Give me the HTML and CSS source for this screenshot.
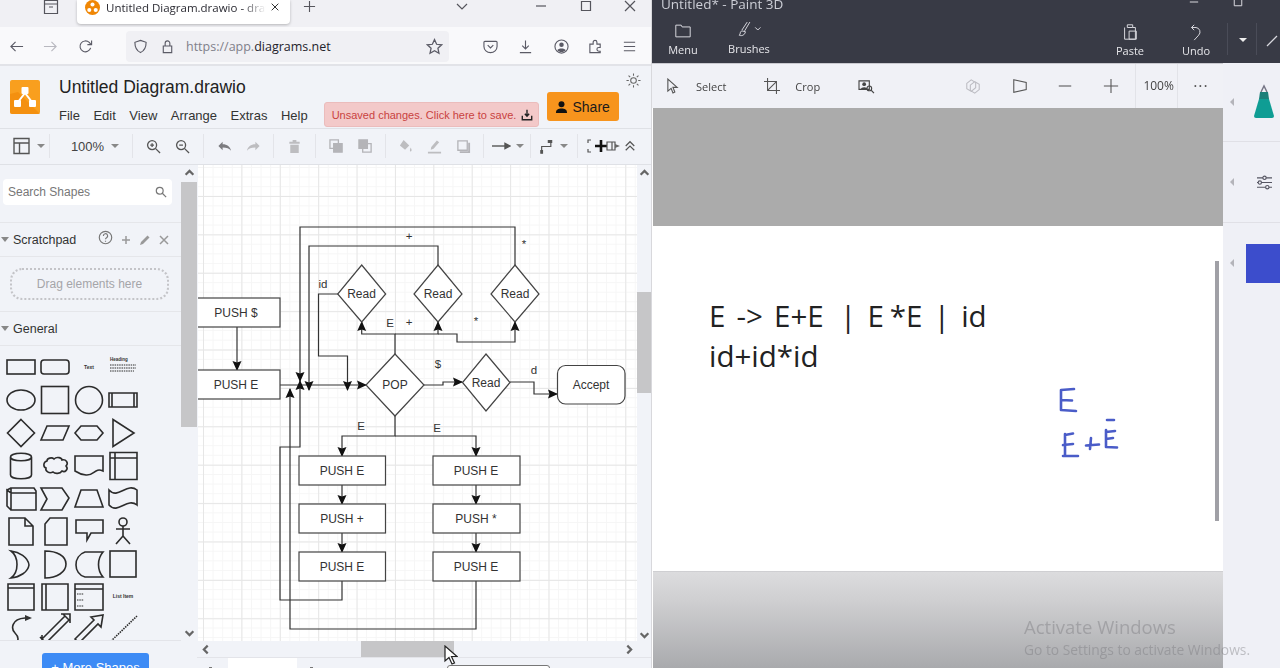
FILE: index.html
```html
<!DOCTYPE html>
<html lang="en">
<head>
<meta charset="utf-8">
<title>draw.io and Paint 3D</title>
<link rel="stylesheet" href="styles.css">
</head>
<body>
<div class="screen">
  <section class="browser">
    <div class="tabstrip">
      <svg class="ti archive" viewBox="0 0 18 18"><path d="M2.500 2.500h13v13h-13zM2.500 6h13M7 9h4"/></svg>
      <div class="tab">
        <svg class="favicon" viewBox="0 0 14 14"><circle cx="7" cy="7" r="7" fill="#f08705"/><circle cx="7" cy="4.200" r="1.900" fill="#fff"/><circle cx="4" cy="9.400" r="1.900" fill="#fff"/><circle cx="10" cy="9.400" r="1.900" fill="#fff"/></svg>
        <span class="tabtitle">Untitled Diagram.drawio - draw.io</span>
        <svg class="ti tabx" viewBox="0 0 12 12"><path d="M2 2l8 8M10 2l-8 8"/></svg>
      </div>
      <svg class="ti plus" viewBox="0 0 14 14"><path d="M7 1v12M1 7h12"/></svg>
      <svg class="ti chev" viewBox="0 0 14 14"><path d="M2 4l5 5 5-5"/></svg>
      <svg class="ti wmin" viewBox="0 0 12 12"><path d="M1 6h10"/></svg>
      <svg class="ti wmax" viewBox="0 0 12 12"><path d="M1.500 1.500h9v9h-9z"/></svg>
      <svg class="ti wclose" viewBox="0 0 12 12"><path d="M1 1l10 10M11 1l-10 10"/></svg>
    </div>
    <div class="navbar">
      <svg class="ni back" viewBox="0 0 16 16"><path d="M15 8H2M7 3L2 8l5 5"/></svg>
      <svg class="ni fwd" viewBox="0 0 16 16"><path d="M1 8h13M9 3l5 5-5 5"/></svg>
      <svg class="ni reload" viewBox="0 0 16 16"><path d="M13.500 9.500A5.800 5.800 0 1 1 12 3.700L14 6M14.500 1.500V6H10"/></svg>
      <div class="urlbar">
        <svg class="ni shield" viewBox="0 0 16 16"><path d="M8 1.500l6 2c0 6-1.500 9-6 11-4.500-2-6-5-6-11z"/></svg>
        <svg class="ni lock" viewBox="0 0 16 16"><path d="M3.500 7.500h9v7h-9zM5.500 7.500V4.500a2.500 2.500 0 0 1 5 0v3"/></svg>
        <span class="url">https://app.<b>diagrams.net</b></span>
        <svg class="ni star" viewBox="0 0 16 16"><path d="M8 1.500l2 4.400 4.700.5-3.500 3.200 1 4.700L8 11.900l-4.200 2.400 1-4.700L1.300 6.400 6 5.900z"/></svg>
      </div>
      <svg class="ni pocket" viewBox="0 0 16 16"><path d="M2 2.500h12a1 1 0 0 1 1 1V8a7 6.500 0 0 1-14 0V3.500a1 1 0 0 1 1-1zM5 6.500l3 3 3-3"/></svg>
      <svg class="ni dl" viewBox="0 0 16 16"><path d="M8 1.500v9M4.500 7L8 10.500 11.500 7M2 14.500h12"/></svg>
      <svg class="ni acct" viewBox="0 0 16 16"><circle cx="8" cy="8" r="7"/><circle class="solid" cx="8" cy="6" r="2.400"/><path class="solid" d="M3.500 12c1-2.500 8-2.500 9 0-2 2.500-7 2.500-9 0z"/></svg>
      <svg class="ni ext" viewBox="0 0 16 16"><path d="M2 6h3.500V4a2 2 0 0 1 4 0v2H13v3.500h-1.500a2 2 0 0 0 0 4H13V15H2z" transform="translate(0 -.5)"/></svg>
      <svg class="ni menu" viewBox="0 0 16 16"><path d="M2 3.500h12M2 8h12M2 12.500h12"/></svg>
    </div>

    <header class="dheader">
      <svg class="dlogo" viewBox="0 0 30 34"><rect width="30" height="34" rx="2" fill="#f99f1e"/><path d="M0 32V14l8-2 22 22H2a2 2 0 0 1-2-2z" fill="#f08705" opacity=".6"/><path d="M15 13L8 22M15 13l7 9" stroke="#fff" stroke-width="2" fill="none"/><rect x="11.500" y="7" width="7" height="7" rx="1" fill="#fff"/><rect x="4" y="20" width="7" height="7" rx="1" fill="#fff"/><rect x="19" y="20" width="7" height="7" rx="1" fill="#fff"/></svg>
      <div class="dhead-main">
        <div class="dtitle">Untitled Diagram.drawio</div>
        <div class="drow">
          <nav class="dmenu"><span>File</span><span>Edit</span><span>View</span><span>Arrange</span><span>Extras</span><span>Help</span></nav>
          <div class="unsaved">Unsaved changes. Click here to save.
            <svg class="savei" viewBox="0 0 14 14"><path d="M7 1v7M4.500 5.500L7 8.500l2.500-3M1.500 8v4.500h11V8"/></svg>
          </div>
          <div class="share"><svg class="sharei" viewBox="0 0 14 14"><circle cx="7" cy="4" r="3.200"/><path d="M1 13.500c0-4 2.500-5 6-5s6 1 6 5z"/></svg>Share</div>
        </div>
      </div>
      <svg class="sun" viewBox="0 0 16 16"><circle cx="8" cy="8" r="3"/><path d="M8 .5v2.500M8 13v2.500M.5 8H3M13 8h2.500M2.700 2.700l1.800 1.800M11.500 11.500l1.800 1.800M2.700 13.300l1.800-1.800M11.500 4.500l1.800-1.800"/></svg>
    </header>

    <div class="dtools">
      <div class="tg"><svg class="tbi dark" viewBox="0 0 18 18"><path d="M1.500 1.500h15v15h-15zM1.500 6h15M7 6v10.500"/></svg><i class="caret"></i></div>
      <div class="tg"><span class="zoomval">100%</span><i class="caret"></i></div>
      <div class="tg"><svg class="tbi dark" viewBox="0 0 16 16"><circle cx="6.500" cy="6.500" r="4.800"/><path d="M10 10l5 5M4.500 6.500h4M6.500 4.500v4"/></svg><svg class="tbi dark" viewBox="0 0 16 16"><circle cx="6.500" cy="6.500" r="4.800"/><path d="M10 10l5 5M4.500 6.500h4"/></svg></div>
      <div class="tg"><svg class="tbi fillsolid" viewBox="0 0 16 16"><path d="M1.500 7.500L6 3v2.500c5 0 8 2.500 9 7-2-2.500-4.500-3.500-9-3.500V12z"/></svg><svg class="tbi fillsolid faint" viewBox="0 0 16 16"><path d="M14.500 7.500L10 3v2.500c-5 0-8 2.500-9 7 2-2.500 4.500-3.500 9-3.500V12z"/></svg></div>
      <div class="tg"><svg class="tbi fillsolid faint" viewBox="0 0 16 16"><path d="M2.500 3h11v2h-11zM6 1h4v2H6zM3.500 6h9v9h-9z"/></svg></div>
      <div class="tg"><svg class="tbi faint" viewBox="0 0 16 16"><path d="M1 1h9v9H1z"/><path class="solid" d="M5 5h9v9H5z"/></svg><svg class="tbi faint" viewBox="0 0 16 16"><path class="solid" d="M1 1h9v9H1z"/><path d="M5 5h9v9H5z"/></svg></div>
      <div class="tg"><svg class="tbi fillsolid faint" viewBox="0 0 16 16"><path d="M6 1l6 6-4.500 4.500L2 7zM13.500 9c1 2 1.500 3 .5 4s-2-.5-.5-4z"/></svg><svg class="tbi fillsolid faint" viewBox="0 0 16 16"><path d="M10.500 1.500l2.500 2-6 7-3 1 .5-3zM1 13.500h14V15.500H1z"/></svg><svg class="tbi faint" viewBox="0 0 16 16"><path d="M2 2h10v10H2z"/><path d="M14 4v10H4" stroke-width="2"/></svg></div>
      <div class="tg"><svg class="tbi wide dark" viewBox="0 0 20 10"><path d="M1 5h15"/><path class="solid" d="M14 2.500L19 5l-5 2.500z"/></svg><i class="caret"></i></div>
      <div class="tg"><svg class="tbi dark nom" viewBox="0 0 18 18"><path d="M2 15V9h11V3"/><path class="solid" d="M10 2h4v2h-4zM1 14h2v3H1z"/></svg><i class="caret"></i></div>
      <div class="tg tg-end">
        <svg class="fitglyph" viewBox="0 0 34 14"><path class="thin" d="M1 4V1h3M1 10v3h3"/><path class="bold" d="M14 1v12M8 7h12"/><path class="thin" d="M20 3h8v8h-8zM25 3v8"/><path class="arrowfill" d="M28 5l5 2-5 2z"/></svg>
        <svg class="tbi chevs" viewBox="0 0 14 14"><path d="M2 7l5-5 5 5M2 12l5-5 5 5"/></svg>
      </div>
    </div>

    <div class="workspace">
      <aside class="sidebar">
        <div class="sidecol">
          <div class="sidepane">
            <div class="search"><span>Search Shapes</span><svg class="srch" viewBox="0 0 14 14"><circle cx="5.500" cy="5.500" r="4"/><path d="M8.500 8.500l4.500 4.500"/></svg></div>
            <div class="secthead sh-scratch"><i class="tri"></i><span>Scratchpad</span>
              <div class="sectacts">
                <svg class="qm" viewBox="0 0 14 14"><circle cx="7" cy="7" r="5.800"/><path d="M5 5.500a2 2 0 1 1 3 1.700c-.7.400-1 .8-1 1.500M7 10v1"/></svg>
                <svg class="act" viewBox="0 0 12 12"><path d="M6 2v8M2 6h8"/></svg>
                <svg class="act" viewBox="0 0 12 12"><path class="solid" d="M8.500 1.500l2 2L4 10l-3 1 1-3z"/></svg>
                <svg class="act" viewBox="0 0 12 12"><path d="M2 2l8 8M10 2l-8 8"/></svg>
              </div>
            </div>
            <div class="dropzone-wrap"><div class="dropzone">Drag elements here</div></div>
            <div class="secthead sh-general"><i class="tri"></i><span>General</span></div>
            <div class="shapes">
              <svg viewBox="0 0 32 32"><rect x="2" y="9" width="28" height="14"/></svg>
              <svg viewBox="0 0 32 32"><rect x="2" y="9" width="28" height="14" rx="3"/></svg>
              <svg viewBox="0 0 32 32"><text x="16" y="18" class="tiny">Text</text></svg>
              <svg viewBox="0 0 32 32"><text x="3" y="10" class="tiny left">Heading</text><path class="dots" d="M3 14h26M3 17h26M3 20h24"/></svg>

              <svg viewBox="0 0 32 32"><ellipse cx="16" cy="16" rx="14" ry="10"/></svg>
              <svg viewBox="0 0 32 32"><rect x="2.500" y="2.500" width="27" height="27"/></svg>
              <svg viewBox="0 0 32 32"><circle cx="16" cy="16" r="13.500"/></svg>
              <svg viewBox="0 0 32 32"><path d="M2 9h28v14H2zM5 9v14M27 9v14"/></svg>

              <svg viewBox="0 0 32 32"><path d="M16 2.500L29.500 16 16 29.500 2.500 16z"/></svg>
              <svg viewBox="0 0 32 32"><path d="M8 9h22l-6 14H2z"/></svg>
              <svg viewBox="0 0 32 32"><path d="M8 9h16l6 7-6 7H8l-6-7z"/></svg>
              <svg viewBox="0 0 32 32"><path d="M6 2.500L27 16 6 29.500z"/></svg>

              <svg viewBox="0 0 32 32"><path d="M5.500 7c0-5 21-5 21 0v18c0 5-21 5-21 0zM5.500 7c0 5 21 5 21 0"/></svg>
              <svg viewBox="0 0 32 32"><path d="M8 11c0-3 5-4 7-2 3-3 8-1 8 1 4-1 7 3 4 6 3 3-1 7-4 5-2 3-7 3-9 1-4 2-8-1-7-4-3-1-3-6 1-7z"/></svg>
              <svg viewBox="0 0 32 32"><path d="M2 6h28v15c-8-4-9 5-17 4-5-.5-8-2-11-4z"/></svg>
              <svg viewBox="0 0 32 32"><path d="M3 2.500h27v27H3zM3 8h27M8 2.500v27"/></svg>

              <svg viewBox="0 0 32 32"><path d="M6 6h23l2 3v19H6zM2 8l4-2M6 28l-4-4V8l4 3h25M6 11v17"/></svg>
              <svg viewBox="0 0 32 32"><path d="M2 6h21l7 10-7 12H2l6-11z"/></svg>
              <svg viewBox="0 0 32 32"><path d="M8 8h16l6 17H2z"/></svg>
              <svg viewBox="0 0 32 32"><path d="M2 8c9 10 18-8 28 0v15c-10-8-19 10-28 0z"/></svg>

              <svg viewBox="0 0 32 32"><path d="M4 3h16l8 8v19H4zM20 3v8h8"/></svg>
              <svg viewBox="0 0 32 32"><path d="M11 3h17v27H6V9z"/></svg>
              <svg viewBox="0 0 32 32"><path d="M3 5h27v13H18l-4 7v-7H3z"/></svg>
              <svg viewBox="0 0 32 32"><circle cx="16" cy="7" r="4"/><path d="M16 11v10M9 14h14M16 21l-7 8M16 21l7 8"/></svg>

              <svg viewBox="0 0 32 32"><path d="M6 3c8 1 17 6 18 14-1 7-9 12-18 13 8-6 8-21 0-27z"/></svg>
              <svg viewBox="0 0 32 32"><path d="M6 3c12 0 21 5 21 13s-9 14-21 14z"/></svg>
              <svg viewBox="0 0 32 32"><path d="M12 4h18c-6 7-6 18 0 25H12C0 26 0 8 12 4z"/></svg>
              <svg viewBox="0 0 32 32"><rect x="3" y="3" width="26" height="26"/></svg>

              <svg viewBox="0 0 32 32"><path d="M3 3h26v26H3zM3 7h26"/></svg>
              <svg viewBox="0 0 32 32"><path d="M3 3h26v26H3zM7 3v26"/></svg>
              <svg viewBox="0 0 32 32"><path d="M2 3h28v26H2zM2 8h28"/><path class="dots" d="M4 13h7M4 19h7M4 25h7"/></svg>
              <svg viewBox="0 0 32 32"><text x="16" y="17" class="tiny">List Item</text></svg>

              <svg viewBox="0 0 32 32"><path d="M2 30c14 2 12-6 8-10s-4-14 10-15"/><path class="solid" d="M20 2l7 3-7 3z"/></svg>
              <svg viewBox="0 0 32 32"><path d="M3 26L26 3M7 30L30 7M1 24l7 7M24 1l7 7M3 22v9h9M22 1h9v9"/></svg>
              <svg viewBox="0 0 32 32"><path d="M2 26L21 7l-3-3 12-2-2 12-3-3L6 30z"/></svg>
              <svg viewBox="0 0 32 32"><path class="dash" d="M2 30L30 3"/></svg>
            </div>
          </div>
          <div class="morewrap"><button class="more">+ More Shapes</button></div>
        </div>
        <div class="rail">
          <svg class="sarrow" viewBox="0 0 10 10"><path d="M1.500 7L5 3.500 8.500 7"/></svg>
          <div class="railthumb"></div>
          <svg class="sarrow railend" viewBox="0 0 10 10"><path d="M1.500 3L5 6.500 8.500 3"/></svg>
        </div>
      </aside>

      <div class="canvaswrap">
        <div class="canvasrow">
          <div class="canvas">
            <svg class="diagram" viewBox="198 165 438 476">
              <defs>
                <marker id="ah" viewBox="0 0 10 10" refX="9" refY="5" markerWidth="10" markerHeight="10" markerUnits="userSpaceOnUse" orient="auto"><path d="M0 .5L10 5 0 9.500 1.500 5z" fill="#111"/></marker>
              </defs>
              <g class="lines">
                <path marker-end="url(#ah)" d="M237 327V370"/>
                <path marker-end="url(#ah)" d="M280 385H366"/>
                <path marker-end="url(#ah)" d="M515 265V227H300V381"/>
                <path marker-end="url(#ah)" d="M438 265V246H309V390"/>
                <path marker-end="url(#ah)" d="M338 294H318.500V356H347.500V390"/>
                <path marker-end="url(#ah)" d="M395 354V334H361.700V322"/>
                <path marker-end="url(#ah)" d="M395 334H438V322"/>
                <path marker-end="url(#ah)" d="M438 334H457V342H515V322"/>
                <path marker-end="url(#ah)" d="M424 385H443V382H462"/>
                <path marker-end="url(#ah)" d="M510 382H534V394H557"/>
                <path marker-end="url(#ah)" d="M395 416V436H342V456"/>
                <path marker-end="url(#ah)" d="M395 436H476V456"/>
                <path marker-end="url(#ah)" d="M342 485V504"/>
                <path marker-end="url(#ah)" d="M342 533V552"/>
                <path marker-end="url(#ah)" d="M476 485V504"/>
                <path marker-end="url(#ah)" d="M476 533V552"/>
                <path marker-end="url(#ah)" d="M342 581V600H280V447H300V381"/>
                <path marker-end="url(#ah)" d="M476 581V629H290V389"/>
              </g>
              <g class="nodes">
                <rect x="190" y="298" width="90" height="29"/>
                <rect x="190" y="370" width="90" height="29"/>
                <path d="M361.700 265L385.700 294 361.700 322 337.700 294z"/>
                <path d="M438 265L462 294 438 322 414 294z"/>
                <path d="M515 265L539 294 515 322 491 294z"/>
                <path d="M395 354L424 385 395 416 366 385z"/>
                <path d="M486 354L510 382.500 486 411 462.500 382.500z"/>
                <rect x="557.500" y="365.500" width="67.500" height="38.500" rx="8"/>
                <rect x="299" y="456" width="86.500" height="29"/>
                <rect x="299" y="504" width="86.500" height="29"/>
                <rect x="299" y="552" width="86.500" height="29"/>
                <rect x="433" y="456" width="87" height="29"/>
                <rect x="433" y="504" width="87" height="29"/>
                <rect x="433" y="552" width="87" height="29"/>
              </g>
              <g class="labels">
                <text x="236" y="317">PUSH $</text>
                <text x="236" y="389">PUSH E</text>
                <text x="361.500" y="298">Read</text>
                <text x="438" y="298">Read</text>
                <text x="515" y="298">Read</text>
                <text x="395" y="389">POP</text>
                <text x="486" y="387">Read</text>
                <text x="591" y="389">Accept</text>
                <text x="342" y="475">PUSH E</text>
                <text x="342" y="523">PUSH +</text>
                <text x="342" y="571">PUSH E</text>
                <text x="476" y="475">PUSH E</text>
                <text x="476" y="523">PUSH *</text>
                <text x="476" y="571">PUSH E</text>
              </g>
              <g class="edge">
                <text x="409" y="240">+</text>
                <text x="524" y="248">*</text>
                <text x="323" y="288">id</text>
                <text x="390" y="327">E</text>
                <text x="409" y="326">+</text>
                <text x="476" y="325">*</text>
                <text x="438" y="368">$</text>
                <text x="534" y="374">d</text>
                <text x="361" y="430">E</text>
                <text x="437" y="432">E</text>
              </g>
            </svg>
          </div>
          <div class="vscroll">
            <svg class="sarrow" viewBox="0 0 10 10"><path d="M1.500 7L5 3.500 8.500 7"/></svg>
            <div class="vthumb"></div>
            <svg class="sarrow railend" viewBox="0 0 10 10"><path d="M1.500 3L5 6.500 8.500 3"/></svg>
          </div>
        </div>
        <div class="hscroll">
          <svg class="sarrow" viewBox="0 0 10 10"><path d="M7 1.500L3.500 5 7 8.500"/></svg>
          <div class="hthumb"></div>
          <svg class="sarrow hend" viewBox="0 0 10 10"><path d="M3 1.500L6.500 5 3 8.500"/></svg>
          <svg class="cursor" viewBox="0 0 14 20"><path d="M1 1v15l4-3.500 3 6.500 2.500-1-3-6.500H13z"/></svg>
        </div>
        <div class="pagetabs">
          <i class="ptick"></i><div class="ptab"></div><i class="ptick"></i><div class="pbox"></div>
        </div>
      </div>
    </div>
  </section>

  <section class="paint">
    <div class="ptitle">
      <div class="ptitletext">Untitled* - Paint 3D</div>
      <svg class="pwin pw1" viewBox="0 0 12 12"><path d="M1 6h10"/></svg>
      <svg class="pwin pw2" viewBox="0 0 12 12"><path d="M1.500 1.500h9v9h-9z"/></svg>
      <div class="pbar">
        <div class="pbtn pb-menu"><svg viewBox="0 0 20 16"><path d="M2 1.500h6l1 2h9v11H2z"/></svg><span>Menu</span></div>
        <div class="pbtn pb-brush"><svg viewBox="0 0 34 20"><path d="M15 1l-6 9M18 1l-6 10M9 11c-3 1-1 3-3 5 3 1 6 0 7-4zM24 7l3 3 3-3" /></svg><span>Brushes</span></div>
        <div class="pbspacer"></div>
        <div class="pbtn pb-paste"><svg viewBox="0 0 20 20"><path d="M4 5v13h12V5h-3M7 5h6V2H7zM9 9h8v9H9z"/></svg><span>Paste</span></div>
        <div class="pbtn pb-undo"><svg viewBox="0 0 20 20"><path d="M8 2L5 5l3 3M5 5h5a5 5 0 0 1 3 8.500L8 19"/></svg><span>Undo</span></div>
        <div class="psep"></div>
        <i class="pcaret"></i>
        <div class="psep"></div>
        <svg class="pslash" viewBox="0 0 14 14"><path d="M2 13L12 3"/></svg>
      </div>
    </div>
    <div class="pbody">
      <div class="pmain">
        <div class="ptools">
          <div class="pt pt-sel"><svg viewBox="0 0 14 18"><path d="M2 1v13l3.500-3 2 5 2-1-2-5H12z"/></svg><span>Select</span></div>
          <div class="pt pt-crop"><svg viewBox="0 0 18 18"><path d="M4 0v14h14M0 4h14v14M14 4L4 14"/></svg><span>Crop</span></div>
          <div class="pt pt-mag"><svg viewBox="0 0 18 16"><path d="M1 2h11v9H1z"/><circle class="pfill" cx="6.500" cy="5.500" r="2"/><path class="pfill" d="M3 11c0-3 7-3 7 0z"/><circle cx="12" cy="10" r="2.500"/><path d="M14 12l3 3"/></svg></div>
          <div class="ptspacer"></div>
          <svg class="pi pi-faint" viewBox="0 0 18 18"><path d="M2 6l5-4 5 3v6l-5 4-5-3zM6 8l5-4 5 3v6l-5 4-5-3z"/></svg>
          <svg class="pi pi-view" viewBox="0 0 18 18"><path d="M2 2l14 3v8L2 16z"/></svg>
          <svg class="pi pi-minus" viewBox="0 0 18 18"><path d="M2 9h14"/></svg>
          <svg class="pi pi-plus" viewBox="0 0 18 18"><path d="M9 1v16M1 9h16"/></svg>
          <div class="ppct">100%</div>
          <div class="pdots">···</div>
        </div>
        <div class="pgrey"></div>
        <div class="pdoc">
          <div class="ptext"><span class="ws-head">E -&gt; E+E</span><span class="ws-mid"> &nbsp;</span>|<span class="ws-tail">&nbsp; E *E &nbsp;|&nbsp; id</span><br>id+id*id</div>
          <svg class="hand" viewBox="0 0 100 90">
            <path d="M21 15V35M21 15L34 14M21 25L32 25.500M21 35L36 36"/>
            <path d="M25 59V81M25 60L33 58.500M23 70L33 69M23 81L38 81"/>
            <path d="M46 70.500L59 69.500M51 63L50 74"/>
            <path d="M67 45L74 45M66 55V72M66 57L75 56M66 64L73 63M66 72L77 72.500"/>
          </svg>
          <div class="pdocbar"></div>
        </div>
        <div class="pgrad"></div>
      </div>
      <aside class="pside">
        <div class="pcell c1"><i class="larr"></i>
          <svg class="marker" viewBox="0 0 22 36"><path d="M8 8L11 2l3 6" fill="none" stroke="#767686" stroke-width="1.500"/><path d="M7 8h8l1 7H6z" fill="#1b7f79"/><path d="M6 15h10l5 17a2 2 0 0 1-2 2H3a2 2 0 0 1-2-2z" fill="#0f9d94"/></svg>
        </div>
        <div class="pcell c2"><i class="larr"></i>
          <svg class="sliders" viewBox="0 0 18 16"><path d="M1 3h16M1 8h16M1 13h16"/><circle cx="9" cy="3" r="1.800"/><circle cx="4" cy="8" r="1.800"/><circle cx="12" cy="13" r="1.800"/></svg>
        </div>
        <div class="pcell c3"><i class="larr"></i><div class="swatch"></div></div>
      </aside>
    </div>
  </section>
</div>
<div class="activate">
  <div class="act1">Activate Windows</div>
  <div class="act2">Go to Settings to activate Windows.</div>
</div>
</body>
</html>
```
FILE: styles.css
```css
* { box-sizing: border-box; }
html, body { margin: 0; padding: 0; height: 100%; overflow: hidden; background: #fff; }
body { font-family: "Liberation Sans", sans-serif; color: #333; }
.screen { width: 1280px; height: 668px; display: flex; overflow: hidden; filter: blur(.35px); }
svg { display: block; flex: none; }

/* browser window */
.browser { width: 652px; height: 668px; display: flex; flex-direction: column; border-right: 1px solid #d8d8dc; flex: none; overflow: hidden; }
.tabstrip { height: 27px; background: #f0f0f4; display: flex; align-items: flex-start; flex: none; }
.ti { fill: none; stroke: #55555c; stroke-width: 1.200; }
.archive { width: 18px; height: 18px; margin-left: 42px; margin-top: -2px; }
.tab { width: 213px; height: 24px; margin-left: 17px; background: #fff; border-radius: 0 0 4px 4px; box-shadow: 0 1px 3px rgba(0,0,0,.25); display: flex; align-items: center; padding: 0 10px 10px 8px; }
.favicon { width: 15px; height: 15px; }
.tabtitle { font: 11.500px "Open Sans", sans-serif; color: #2b2b33; margin-left: 6px; width: 160px; white-space: nowrap; overflow: hidden; -webkit-mask-image: linear-gradient(to right, #000 85%, transparent); mask-image: linear-gradient(to right, #000 85%, transparent); }
.tabx { width: 10px; height: 10px; margin-left: auto; stroke: #333; }
.plus { width: 13px; height: 13px; margin-left: 13px; margin-top: 0; }
.chev { width: 14px; height: 14px; margin-left: 139px; margin-top: 0; }
.wmin, .wmax, .wclose { width: 12px; height: 12px; margin-top: 0; }
.wmin { margin-left: 66px; }
.wmax { margin-left: 33px; }
.wclose { margin-left: 32px; }

.navbar { height: 39px; background: #f9f9fb; display: flex; align-items: center; flex: none; border-bottom: 2px solid #e2e3e8; padding-top: 2px; }
.ni { width: 15px; height: 15px; fill: none; stroke: #5b5b66; stroke-width: 1.200; }
.ni .solid { fill: #5b5b66; stroke: none; }
.back { margin-left: 9px; }
.fwd { margin-left: 19px; stroke: #b8b8bf; }
.reload { margin-left: 20px; }
.urlbar { width: 323px; height: 31px; margin-left: 33px; background: #f0f0f4; border-radius: 4px; display: flex; align-items: center; padding: 0 6px 0 7px; }
.lock { margin-left: 12px; }
.url { font: 12.500px "Open Sans", sans-serif; color: #80808a; margin-left: 11px; }
.url b { font-weight: 400; color: #23232b; }
.star { margin-left: auto; width: 17px; height: 17px; }
.pocket { margin-left: 34px; }
.dl { margin-left: 20px; }
.acct { margin-left: 21px; }
.ext { margin-left: 19px; }
.menu { margin-left: 19px; }

/* draw.io header */
.dheader { height: 63px; background: #f1f3f8; display: flex; flex: none; padding-left: 10px; border-bottom: 1px solid #dfe1e6; }
.dlogo { width: 30px; height: 34px; margin-top: 14px; }
.dhead-main { margin-left: 19px; flex: none; }
.dtitle { font-size: 17.500px; color: #222; height: 32px; line-height: 43px; white-space: nowrap; }
.drow { height: 31px; display: flex; align-items: flex-start; }
.dmenu { display: flex; gap: 13.500px; font-size: 13px; color: #333; height: 31px; line-height: 35px; }
.unsaved { width: 215px; height: 25px; margin-left: 16px; margin-top: 4px; background: #f3c9c9; border: 1px solid #ebbcbc; border-radius: 3px; color: #c9423f; font-size: 11px; display: flex; align-items: center; padding-left: 7px; white-space: nowrap; }
.savei { width: 12px; height: 12px; margin-left: auto; margin-right: 5px; fill: none; stroke: #222; stroke-width: 1.600; }
.share { width: 72px; height: 29px; margin-left: 8px; margin-top: -6px; background: #f7941d; border-radius: 3px; display: flex; align-items: center; justify-content: center; color: #1b1b1b; font-size: 14px; gap: 4px; }
.sharei { width: 13px; height: 14px; fill: #111; }
.sun { width: 15px; height: 15px; margin-left: auto; margin-right: 10px; margin-top: 7px; fill: none; stroke: #666; stroke-width: 1.100; }

/* draw.io toolbar */
.dtools { height: 36px; background: #f1f3f8; display: grid; grid-template-columns: 50px 83px 71px 70px 42px 70px 98px 47px 47px 1fr; flex: none; border-bottom: 1px solid #dfe1e6; align-items: center; padding-bottom: 1px; }
.tg { display: flex; align-items: center; justify-content: center; height: 24px; border-right: 1px solid #e3e4e9; }
.tg:first-child { padding-left: 7px; }
.tg-end { border-right: 0; justify-content: flex-start; padding-left: 9px; }
.tbi { width: 15px; height: 15px; margin: 0 7px; fill: none; stroke: #b4b4b8; stroke-width: 1.400; }
.tbi.dark { stroke: #555; }
.tbi.nom { margin: 0; }
.tbi .solid { fill: currentColor; color: #b4b4b8; stroke: #b4b4b8; }
.tbi.dark .solid { color: #555; stroke: #555; }
.tg:first-child .tbi { width: 19px; height: 18px; margin: 0 1px 0 0; }
.tbi.wide { width: 20px; height: 10px; margin: 0; }
.fillsolid { fill: #7c7c80; stroke: none; }
.fillsolid.faint { fill: #bdbdc0; }
.caret { width: 0; height: 0; border: 4px solid transparent; border-top: 4px solid #888; border-bottom: 0; margin-left: 5px; }
.zoomval { font-size: 13px; color: #444; margin-left: 8px; margin-right: 2px; }
.fitglyph { width: 34px; height: 14px; fill: none; }
.fitglyph .thin { stroke: #555; stroke-width: 1.200; }
.fitglyph .bold { stroke: #111; stroke-width: 2.600; }
.fitglyph .arrowfill { fill: #666; }
.tbi.chevs { margin: 0 0 0 3px; width: 12px; height: 12px; stroke: #555; }

/* workspace */
.workspace { flex: 1; display: flex; min-height: 0; background: #f1f3f8; }
.sidebar { width: 197px; display: flex; flex: none; }
.sidecol { width: 181px; display: flex; flex-direction: column; }
.sidepane { height: 475px; overflow: hidden; }
.search { height: 26px; margin: 14px 9px 0 3px; background: #fff; border-radius: 4px; display: flex; align-items: center; justify-content: space-between; padding: 0 5px; font-size: 12px; color: #777; }
.srch { width: 12px; height: 12px; fill: none; stroke: #777; stroke-width: 1.400; }
.secthead { display: flex; align-items: center; font-size: 12.500px; color: #333; border-top: 1px solid #e5e6ea; border-bottom: 1px solid #e5e6ea; height: 35px; padding-left: 1px; }
.sh-scratch { margin-top: 17px; }
.tri { width: 0; height: 0; border: 4px solid transparent; border-top: 5px solid #888; border-bottom: 0; margin-right: 4px; }
.sectacts { display: flex; align-items: center; margin-left: auto; margin-right: 11px; gap: 7px; }
.qm { width: 15px; height: 15px; fill: none; stroke: #777; stroke-width: 1.100; margin-top: -5px; }
.act { width: 12px; height: 12px; fill: none; stroke: #999; stroke-width: 1.500; }
.act .solid { fill: #999; stroke: none; }
.dropzone-wrap { height: 54px; padding: 11px 12px 0 10px; }
.dropzone { height: 32px; border: 2px dotted #c4c4c8; border-radius: 12px; display: flex; align-items: center; justify-content: center; color: #a5a5a9; font-size: 12px; }
.sh-general { border-top: 1px solid #e5e6ea; height: 35px; }
.shapes { display: grid; grid-template-columns: repeat(4, 34px); grid-auto-rows: 32.750px; padding-left: 4px; padding-top: 5px; justify-items: center; align-items: center; }
.shapes svg { width: 32px; height: 32px; fill: none; stroke: #2c2c2c; stroke-width: 1.600; }
.shapes .solid { fill: #333; stroke: none; }
.shapes .tiny { font-size: 5px; text-anchor: middle; fill: #333; stroke: none; font-weight: 700; }
.shapes .tiny.left { text-anchor: start; font-size: 4.500px; }
.shapes .dots { stroke-dasharray: 1.500 .8; stroke-width: 1; }
.shapes .dash { stroke-dasharray: 1.500 1; }
.morewrap { flex: 1; border-top: 1px solid #e3e4e9; padding: 12px 0 0 42px; overflow: hidden; }
.more { width: 107px; height: 28px; background: #3d8bf5; color: #fff; border: 0; border-radius: 3px; font: 13px "Liberation Sans", sans-serif; padding: 0; display: block; }
.rail { width: 16px; display: flex; flex-direction: column; align-items: stretch; }
.sarrow { width: 11px; height: 11px; fill: none; stroke: #666; stroke-width: 2; margin: 2px auto; flex: none; }
.railthumb { height: 245px; background: #c6c6c8; margin-top: 2px; }
.railend { margin-top: auto; margin-bottom: 0; }
.rail .railend { margin-bottom: 29px; }

.canvaswrap { width: 454px; flex: none; display: flex; flex-direction: column; }
.canvasrow { height: 476px; display: flex; flex: none; }
.canvas { width: 439px; flex: none; margin-left: 1px; background-color: #fff; background-image:
    linear-gradient(#e6e6e6 1px, transparent 1px), linear-gradient(90deg, #e6e6e6 1px, transparent 1px),
    linear-gradient(#f6f6f6 1px, transparent 1px), linear-gradient(90deg, #f6f6f6 1px, transparent 1px);
  background-size: 38.400px 38.400px, 38.400px 38.400px, 9.600px 9.600px, 9.600px 9.600px;
  background-position: 5px 31px, 5px 31px, 5px 2px, 5px 2px; overflow: hidden; }
.diagram { width: 438px; height: 476px; }
.lines path { fill: none; stroke: #333; stroke-width: 1.200; }
.nodes rect, .nodes path { fill: #fff; stroke: #444; stroke-width: 1.200; }
.labels text { font-size: 12px; text-anchor: middle; fill: #333; }
.edge text { font-size: 11.500px; text-anchor: middle; fill: #333; }
.vscroll { width: 15px; flex: none; display: flex; flex-direction: column; }
.vthumb { height: 101px; margin-top: 112px; background: #c6c6c8; }
.hscroll { height: 16px; flex: none; display: flex; align-items: center; position: relative; padding-left: 1px; }
.hscroll .sarrow { margin: 0 0 0 2px; }
.hthumb { width: 93px; height: 16px; margin-left: 150px; background: #c6c6c8; }
.hscroll .hend { margin-left: 170px; }
.cursor { position: absolute; left: 247px; top: 4px; width: 14px; height: 20px; fill: #fff; stroke: #222; stroke-width: 1.200; }
.pagetabs { flex: 1; display: flex; align-items: flex-start; border-top: 1px solid #e3e4e9; min-height: 0; overflow: hidden; }
.ptick { width: 3px; height: 2px; background: #777; margin: 9px 0 0 12px; flex: none; }
.ptab { width: 69px; height: 12px; background: #fff; margin-left: 16px; flex: none; }
.pagetabs .ptab + .ptick { margin-left: 13px; }
.pbox { width: 103px; height: 12px; margin: 7px 0 0 134px; background: #fff; border: 1px solid #777; border-radius: 3px 3px 0 0; flex: none; }

/* Paint 3D */
.paint { flex: 1; height: 668px; display: flex; flex-direction: column; min-width: 0; }
.ptitle { height: 63px; background: #383a45; flex: none; position: relative; color: #e8e8ec; }
.ptitletext { font: 13.500px/8px "Open Sans", sans-serif; color: #ccced6; padding-left: 9px; height: 8px; }
.pwin { position: absolute; top: -3px; width: 10px; height: 10px; fill: none; stroke: #d8d8de; stroke-width: 1.200; }
.pw1 { left: 537px; }
.pw2 { left: 581px; }
.pbar { display: flex; align-items: flex-start; height: 55px; }
.pbtn { display: flex; flex-direction: column; align-items: center; font: 11px "Open Sans", sans-serif; color: #e6e6ea; flex: none; }
.pbtn svg { fill: none; stroke: #d8d8de; stroke-width: 1.100; height: 18px; width: 18px; }
.pb-menu { width: 40px; margin-left: 11px; padding-top: 14px; gap: 2px; }
.pb-brush { width: 50px; margin-left: 21px; padding-top: 13px; gap: 2px; }
.pb-brush svg { width: 30px; }
.pbspacer { flex: 1; }
.pb-paste { width: 40px; padding-top: 15px; gap: 2px; }
.pb-undo { width: 40px; margin-left: 26px; padding-top: 15px; gap: 2px; }
.psep { width: 1px; height: 32px; background: #4a4c58; margin-top: 15px; flex: none; }
.pb-undo + .psep { margin-left: 11px; }
.pcaret { width: 0; height: 0; border: 4px solid transparent; border-top: 4px solid #eee; border-bottom: 0; margin: 30px 9px 0 11px; flex: none; }
.pslash { width: 14px; height: 14px; margin: 25px 1px 0 8px; fill: none; stroke: #d8d8de; stroke-width: 1.200; }
.pbody { flex: 1; display: flex; min-height: 0; }
.pmain { width: 571px; flex: none; display: flex; flex-direction: column; }
.ptools { height: 45px; background: #f0f1f6; flex: none; display: flex; align-items: center; font: 11px "Open Sans", sans-serif; color: #444; border-top: 1px solid #c9c9cf; }
.pt { display: flex; align-items: center; flex: none; }
.pt svg { fill: none; stroke: #555; stroke-width: 1.200; flex: none; }
.pt-sel { margin-left: 14px; }
.pt-sel svg { width: 13px; height: 17px; margin-right: 17px; }
.pt-crop { margin-left: 38px; }
.pt-crop svg { width: 16px; height: 16px; margin-right: 15px; }
.pt-mag { margin-left: 38px; }
.pt-mag svg { width: 17px; height: 15px; stroke: #444; }
.pt-mag .pfill { fill: #444; stroke: none; }
.ptspacer { width: 90px; flex: none; }
.pi { width: 16px; height: 16px; fill: none; stroke: #555; stroke-width: 1.200; flex: none; }
.pi-faint { stroke: #bcbcc2; }
.pi-view { margin-left: 31px; }
.pi-minus { margin-left: 29px; }
.pi-plus { margin-left: 30px; }
.ppct { width: 43px; height: 44px; margin-left: 16px; border-left: 1px solid #e2e3e8; border-right: 1px solid #e2e3e8; display: flex; align-items: center; justify-content: center; font-size: 12px; color: #444; padding: 0 0 2px 4px; white-space: nowrap; }
.pdots { margin-left: 15px; font-size: 16px; color: #555; letter-spacing: 1px; }
.pgrey { height: 118px; flex: none; background: #ababab; margin-left: 1px; }
.pdoc { height: 346px; flex: none; background: #fff; position: relative; border-bottom: 1px solid #cfcfd2; margin-left: 1px; }
.ptext { font: 29.500px/40px "Open Sans", sans-serif; color: #222; padding: 70px 0 0 56px; white-space: nowrap; }
.ws-head { word-spacing: 3.500px; }
.ws-mid { word-spacing: .5px; }
.ws-tail { word-spacing: -2px; }
.hand { position: absolute; left: 387px; top: 149px; width: 100px; height: 90px; fill: none; stroke: #4a5cc8; stroke-width: 2.600; stroke-linecap: round; stroke-linejoin: round; }
.pdocbar { position: absolute; right: 4px; top: 35px; width: 4px; height: 260px; background: #a0a0a6; }
.pgrad { flex: 1; margin-left: 1px; background: linear-gradient(#dcdcde, #cfcfd1 30%, #a9aaad); }
.pside { flex: 1; background: #eff0f6; min-width: 0; overflow: hidden; }
.pcell { display: flex; align-items: center; position: relative; }
.c1 { height: 79px; padding-left: 27px; border-bottom: 1px solid #e0e0e6; }
.c2 { height: 81px; padding-left: 27px; border-bottom: 1px solid #e0e0e6; }
.c3 { height: 80px; }
.larr { position: absolute; left: 7px; top: 50%; margin-top: -4px; width: 0; height: 0; border: 4px solid transparent; border-right: 4px solid #b4b4ba; border-left: 0; }
.marker { width: 22px; height: 36px; margin-left: 3px; margin-top: 0; }
.sliders { width: 17px; height: 15px; margin-left: 6px; fill: #eff0f6; stroke: #555562; stroke-width: 1.200; }
.swatch { width: 34px; height: 39px; background: #3c4dcc; margin-left: 23px; }

/* watermark */
.activate { position: absolute; left: 1024px; top: 615px; font-family: "Open Sans", sans-serif; color: rgba(120,120,124,.42); filter: blur(.35px); }
.act1 { font-size: 18.500px; line-height: 24px; }
.act2 { font-size: 13.800px; line-height: 18px; margin-top: 2px; white-space: nowrap; }
```
